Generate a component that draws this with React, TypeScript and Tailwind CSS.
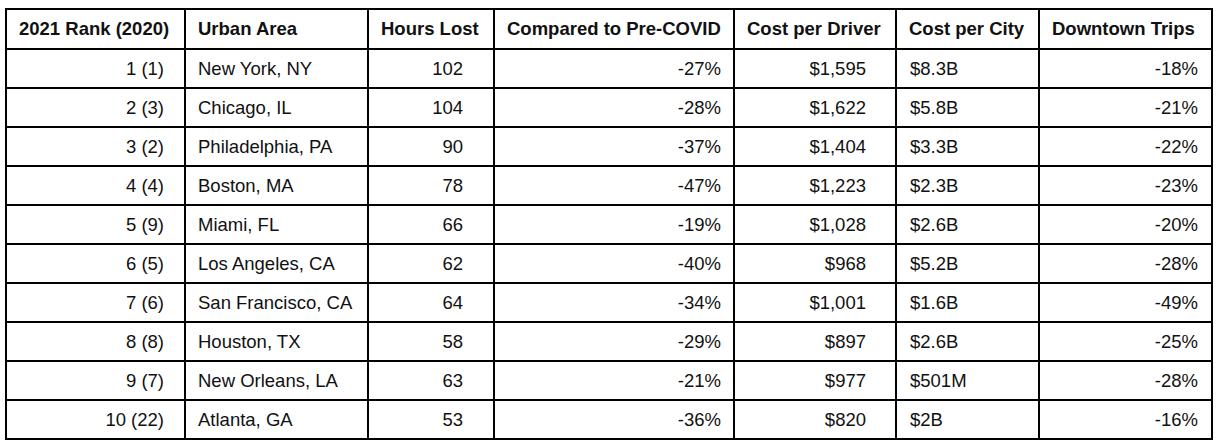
const rows = [
  ['1 (1)', 'New York, NY', '102', '-27%', '$1,595', '$8.3B', '-18%'],
  ['2 (3)', 'Chicago, IL', '104', '-28%', '$1,622', '$5.8B', '-21%'],
  ['3 (2)', 'Philadelphia, PA', '90', '-37%', '$1,404', '$3.3B', '-22%'],
  ['4 (4)', 'Boston, MA', '78', '-47%', '$1,223', '$2.3B', '-23%'],
  ['5 (9)', 'Miami, FL', '66', '-19%', '$1,028', '$2.6B', '-20%'],
  ['6 (5)', 'Los Angeles, CA', '62', '-40%', '$968', '$5.2B', '-28%'],
  ['7 (6)', 'San Francisco, CA', '64', '-34%', '$1,001', '$1.6B', '-49%'],
  ['8 (8)', 'Houston, TX', '58', '-29%', '$897', '$2.6B', '-25%'],
  ['9 (7)', 'New Orleans, LA', '63', '-21%', '$977', '$501M', '-28%'],
  ['10 (22)', 'Atlanta, GA', '53', '-36%', '$820', '$2B', '-16%'],
];

const headers = [
  '2021 Rank (2020)',
  'Urban Area',
  'Hours Lost',
  'Compared to Pre-COVID',
  'Cost per Driver',
  'Cost per City',
  'Downtown Trips',
];

// per-column cell alignment / padding
const cellClass = [
  'text-right pr-[20px]',
  'text-left pl-[12px]',
  'text-right pr-[30px]',
  'text-right pr-[12px]',
  'text-right pr-[29px]',
  'text-left pl-[13px]',
  'text-right pr-[13px]',
];

export default function App() {
  return (
    <div className="min-h-screen bg-white pl-[5px] pt-[8px] font-['Liberation_Sans',Arial,sans-serif] text-[18.5px] text-[#111]">
      <table className="w-[1206px] table-fixed border-collapse border-2 border-black">
        <colgroup>
          <col className="w-[179px]" />
          <col className="w-[183px]" />
          <col className="w-[126px]" />
          <col className="w-[240px]" />
          <col className="w-[162px]" />
          <col className="w-[143px]" />
          <col className="w-[173px]" />
        </colgroup>
        <thead>
          <tr className="h-[40px]">
            {headers.map((h) => (
              <th
                key={h}
                className="whitespace-nowrap border-2 border-black pl-[12px] pr-0 text-left font-bold"
              >
                {h}
              </th>
            ))}
          </tr>
        </thead>
        <tbody>
          {rows.map((r) => (
            <tr key={r[0]} className="h-[39px]">
              {r.map((c, i) => (
                <td key={i} className={`whitespace-nowrap border-2 border-black p-0 ${cellClass[i]}`}>
                  {c}
                </td>
              ))}
            </tr>
          ))}
        </tbody>
      </table>
    </div>
  );
}
